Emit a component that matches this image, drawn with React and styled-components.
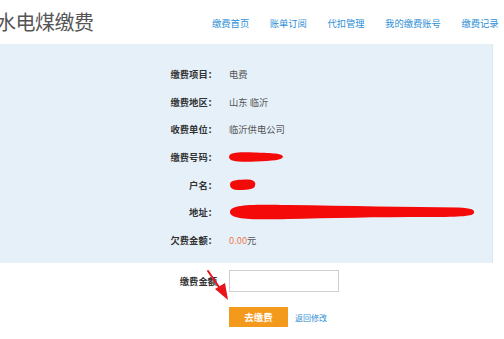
import React from "react";
import styled, { createGlobalStyle } from "styled-components";

const GlobalStyle = createGlobalStyle`
  html, body {
    margin: 0;
    padding: 0;
    background: #fff;
    overflow: hidden;
  }
  body {
    font-family: "Noto Sans CJK SC", "Noto Sans", sans-serif;
  }
`;

const Page = styled.div`
  width: 504px;
  height: 339px;
  overflow: hidden;
`;

const Header = styled.div`
  display: flex;
  align-items: center;
  height: 44px;
`;

const Title = styled.h1`
  margin: -2px 0 0 -4px;
  width: 216px;
  font-size: 20px;
  font-weight: normal;
  color: #555;
  letter-spacing: -0.5px;
  white-space: nowrap;
`;

const Nav = styled.nav`
  display: flex;
  gap: 20.5px;
  margin-top: 2px;
  white-space: nowrap;
`;

const NavItem = styled.a`
  font-size: 9.3px;
  color: #2e8fd6;
  text-decoration: none;
`;

const Panel = styled.div`
  width: 493px;
  box-sizing: border-box;
  background: #e5f0f9;
  border-right: 1px solid #dbe8f2;
  padding: 16px 0 9px;
`;

const Row = styled.div`
  display: grid;
  grid-template-columns: 217px 1fr;
  column-gap: 12px;
  align-items: center;
  height: 27.7px;
`;

const Label = styled.span`
  text-align: right;
  font-size: 9.3px;
  font-weight: bold;
  color: #333;
  white-space: nowrap;
`;

const Value = styled.span`
  font-size: 9.3px;
  color: #555;
  white-space: nowrap;
  display: flex;
  align-items: center;
`;

const Amount = styled.span`
  color: #f0784a;
`;

const Scribble = styled.svg`
  display: block;
  margin-left: ${(p) => p.$shift || 0}px;
`;

const Form = styled.div`
  position: relative;
  padding-top: 7px;
`;

const FormRow = styled.div`
  display: grid;
  grid-template-columns: 217px 1fr;
  column-gap: 12px;
  align-items: center;
`;

const AmountInput = styled.input`
  width: 110px;
  height: 22px;
  box-sizing: border-box;
  border: 1px solid #cfcfcf;
  background: #fff;
  outline: none;
  padding: 0 4px;
`;

const Actions = styled.div`
  display: flex;
  align-items: center;
  gap: 7px;
  margin: 15px 0 0 229px;
`;

const PayButton = styled.button`
  width: 59px;
  height: 20px;
  border: none;
  background: #f39a1d;
  color: #fff;
  font-family: inherit;
  font-size: 9.5px;
  font-weight: bold;
  padding: 0;
  cursor: pointer;
`;

const BackLink = styled.a`
  font-size: 8px;
  color: #2e8fd6;
  margin-top: 2px;
  text-decoration: none;
`;

const Arrow = styled.svg`
  position: absolute;
  left: 204px;
  top: 7px;
  overflow: visible;
`;

const rows = [
  { label: "缴费项目：", value: "电费" },
  { label: "缴费地区：", value: "山东 临沂" },
  { label: "收费单位：", value: "临沂供电公司" },
  {
    label: "缴费号码：",
    scribble: { w: 58, h: 14, shift: -3, d: "M3 7 C3 2 14 2 28 2.5 C42 3 56 3 57 6.5 C57 10 46 11 30 11.5 C14 12 3 12 3 7 Z" },
  },
  {
    label: "户名：",
    scribble: { w: 29, h: 12, shift: -1, d: "M2 5 C2 1 12 0.5 20 0.5 C27 1 28 4 27 6.5 C27 10 20 11 12 11 C4 11 2 9 2 5 Z" },
  },
  {
    label: "地址：",
    scribble: {
      w: 248,
      h: 18,
      shift: -1,
      d: "M2 9 C2 2 20 1 60 2 C120 3 180 4 230 4.5 C244 5 247 7 246 10 C245 13 235 14 200 14 C150 14 100 15 60 16 C20 17 2 16 2 9 Z",
    },
  },
  { label: "欠费金额：", amount: "0.00" },
];

const navItems = ["缴费首页", "账单订阅", "代扣管理", "我的缴费账号", "缴费记录"];

export default function App() {
  return (
    <Page>
      <GlobalStyle />
      <Header>
        <Title>水电煤缴费</Title>
        <Nav>
          {navItems.map((item) => (
            <NavItem key={item}>{item}</NavItem>
          ))}
        </Nav>
      </Header>
      <Panel>
        {rows.map((row) => (
          <Row key={row.label}>
            <Label>{row.label}</Label>
            <Value>
              {row.value}
              {row.scribble && (
                <Scribble
                  width={row.scribble.w}
                  height={row.scribble.h}
                  $shift={row.scribble.shift}
                  viewBox={`0 0 ${row.scribble.w} ${row.scribble.h}`}
                >
                  <path d={row.scribble.d} fill="#f50a0a" />
                </Scribble>
              )}
              {row.amount && (
                <>
                  <Amount>{row.amount}</Amount>元
                </>
              )}
            </Value>
          </Row>
        ))}
      </Panel>
      <Form>
        <FormRow>
          <Label>缴费金额</Label>
          <AmountInput type="text" />
        </FormRow>
        <Actions>
          <PayButton>去缴费</PayButton>
          <BackLink>返回修改</BackLink>
        </Actions>
        <Arrow width="30" height="34" viewBox="0 0 30 34">
          <line x1="4" y1="1" x2="17" y2="20" stroke="#e8141a" strokeWidth="2" strokeLinecap="round" />
          <polygon points="11,19 21,13 24,30" fill="#e8141a" />
        </Arrow>
      </Form>
    </Page>
  );
}
